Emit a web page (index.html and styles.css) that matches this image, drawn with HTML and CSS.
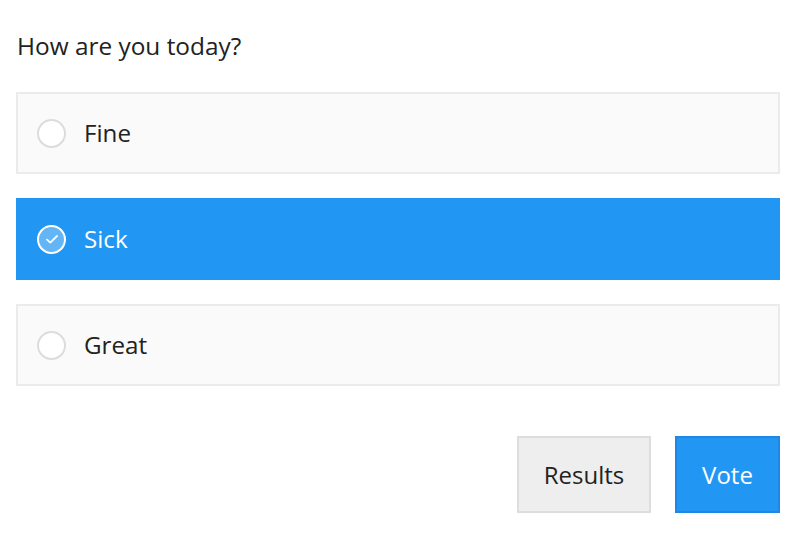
FILE: index.html
```html
<!DOCTYPE html>
<html>
<head>
<meta charset="utf-8">
<link rel="stylesheet" href="styles.css">
</head>
<body>
<div class="poll">
  <h1 class="question">How are you today?</h1>
  <div class="options">
    <div class="option">
      <span class="radio"></span>
      <span class="label">Fine</span>
    </div>
    <div class="option selected">
      <span class="radio checked">
        <svg width="16" height="16" viewBox="0 0 16 16"><path d="M3 8.6 L6.3 11.6 L13 5" fill="none" stroke="#fff" stroke-width="1.8" stroke-linecap="round" stroke-linejoin="round"/></svg>
      </span>
      <span class="label">Sick</span>
    </div>
    <div class="option">
      <span class="radio"></span>
      <span class="label">Great</span>
    </div>
  </div>
  <div class="actions">
    <button class="btn btn-results">Results</button>
    <button class="btn btn-vote">Vote</button>
  </div>
</div>
</body>
</html>
```

FILE: styles.css
```css
html, body {
  margin: 0;
  padding: 0;
  background: #fff;
}
body {
  font-family: "Open Sans", "Noto Sans", sans-serif;
  color: #222;
}
.poll {
  padding: 28px 20px 0 16px;
}
.question {
  margin: 0 0 28px 1px;
  font-size: 24.4px;
  font-weight: 400;
  line-height: 36px;
  color: #222;
}
.options {
  display: flex;
  flex-direction: column;
  gap: 24px;
}
.option {
  display: flex;
  align-items: center;
  height: 82px;
  box-sizing: border-box;
  border: 2px solid #ebebeb;
  background: #fafafa;
  padding-left: 19px;
}
.option.selected {
  background: #2196f3;
  border-color: #2196f3;
  color: #fff;
}
.radio {
  width: 29px;
  height: 29px;
  box-sizing: border-box;
  border-radius: 50%;
  border: 2px solid #dcdcdc;
  background: #fff;
  display: flex;
  align-items: center;
  justify-content: center;
  margin-right: 18px;
}
.radio.checked {
  border-color: #fff;
  background: #64b5f6;
}
.label {
  font-size: 24.2px;
  line-height: 32px;
}
.actions {
  display: flex;
  justify-content: flex-end;
  gap: 24px;
  margin-top: 50px;
}
.btn {
  font-family: "Open Sans", "Noto Sans", sans-serif;
  font-size: 24px;
  height: 77px;
  box-sizing: border-box;
  cursor: pointer;
}
.btn-results {
  width: 134px;
  background: #eeeeee;
  border: 2px solid #dddddd;
  color: #222;
}
.btn-vote {
  width: 105px;
  background: #2196f3;
  border: 2px solid #1e88e5;
  color: #fff;
}
```
